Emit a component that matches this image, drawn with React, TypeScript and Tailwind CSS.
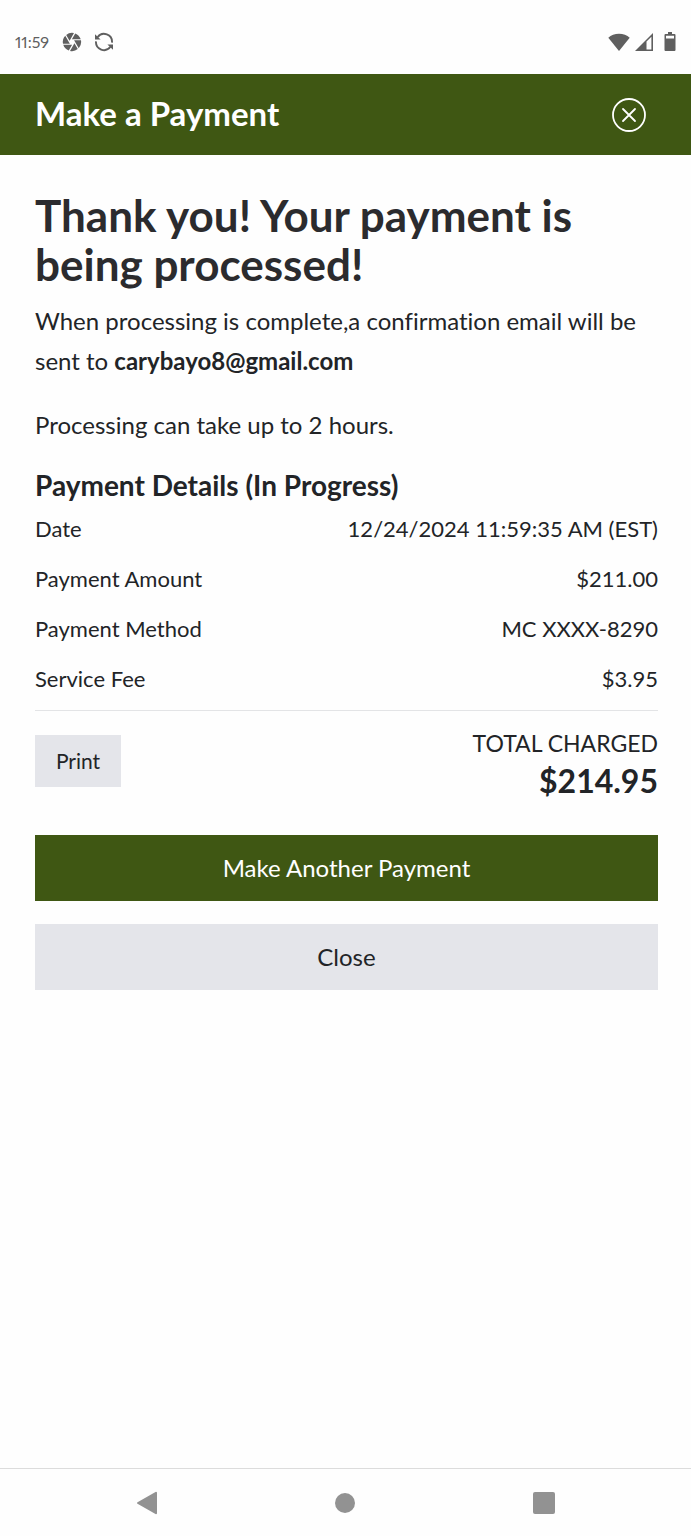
import { MdCamera } from 'react-icons/md';

interface Detail {
  label: string;
  value: string;
}

const details: Detail[] = [
  { label: 'Date', value: '12/24/2024 11:59:35 AM (EST)' },
  { label: 'Payment Amount', value: '$211.00' },
  { label: 'Payment Method', value: 'MC XXXX-8290' },
  { label: 'Service Fee', value: '$3.95' },
];

function StatusBar() {
  return (
    <div className="flex h-[74px] items-center justify-between px-[15px] pt-[9px] text-[#5f5f5f]">
      <div className="flex items-center">
        <span className="w-[46px] text-[16px] leading-6 proportional-nums">11:59</span>
        <MdCamera className="size-[22px]" />
        <svg viewBox="0 0 20 20" className="ml-[11px] size-5" fill="none" stroke="currentColor" strokeWidth="1.9">
          <path d="M3.6 5.2A8 8 0 0 1 18 10.6M16.4 14.8A8 8 0 0 1 2 9.4" />
          <path d="M1 2.2V7.6H6.6ZM19 17.8V12.4H13.4Z" fill="currentColor" stroke="none" />
        </svg>
      </div>
      <div className="flex items-center">
        <svg viewBox="0 0 22 18" className="h-[18px] w-[22px]" fill="currentColor">
          <path d="M11 18 0.3 4.8C3 2.2 6.8 0.7 11 0.7S19 2.2 21.7 4.8Z" />
        </svg>
        <svg viewBox="0 0 18 18" className="ml-[5px] size-[18px]" fill="currentColor">
          <path fillRule="evenodd" d="M0 18 18 0V18ZM11.5 8.5V16.4H16.4V3.7Z" />
        </svg>
        <svg viewBox="0 0 12 19" className="ml-[11px] h-[19px] w-3" fill="currentColor">
          <path fillRule="evenodd" d="M4 0H8V2H10.5Q11.5 2 11.5 3V18Q11.5 19 10.5 19H1.5Q0.5 19 0.5 18V3Q0.5 2 1.5 2H4ZM2 3.8V6.5H10V3.8Z" />
        </svg>
      </div>
    </div>
  );
}

function NavBar() {
  return (
    <nav className="flex h-[68px] items-center justify-around border-t border-[#dcdcdc] px-[47px] text-[#929292]">
      <button type="button" aria-label="Back">
        <svg viewBox="0 0 22 24" className="h-6 w-[22px]" fill="currentColor" stroke="currentColor" strokeWidth="2" strokeLinejoin="round">
          <path d="M2 12 20 1.8V22.2Z" />
        </svg>
      </button>
      <button type="button" aria-label="Home">
        <svg viewBox="0 0 20 20" className="size-5" fill="currentColor">
          <circle cx="10" cy="10" r="10" />
        </svg>
      </button>
      <button type="button" aria-label="Recent apps">
        <svg viewBox="0 0 22 22" className="size-[22px]" fill="currentColor">
          <rect width="22" height="22" rx="2" />
        </svg>
      </button>
    </nav>
  );
}

export default function App() {
  return (
    <div className="flex min-h-screen flex-col bg-[#fefefe] font-[Lato,sans-serif] text-[#222427] [font-variant-ligatures:none]">
      <StatusBar />

      <header className="flex h-[81px] items-center justify-between bg-[#3f5713] pl-[35px] pr-[45px] text-white">
        <span className="pb-1 text-[33px] font-bold leading-10">Make a Payment</span>
        <button type="button" aria-label="Dismiss">
          <svg viewBox="0 0 34 34" className="size-[34px]" fill="none" stroke="currentColor" strokeWidth="1.8" strokeLinecap="round">
            <circle cx="17" cy="17" r="16" />
            <path d="M11 11 23 23M23 11 11 23" />
          </svg>
        </button>
      </header>

      <main className="flex-1 pl-[35px] pr-[33px] pt-9">
        <h1 className="text-[44px] font-bold leading-[49px] text-[#2b2b2e]">
          Thank you! Your payment is being processed!
        </h1>
        <p className="mt-3 text-[24px] leading-10">
          When processing is complete,a confirmation email will be sent to{' '}
          <strong className="font-bold">carybayo8@gmail.com</strong>
        </p>
        <p className="mt-6 text-[24px] leading-10">Processing can take up to 2 hours.</p>

        <h2 className="mt-6 text-[28px] font-bold leading-8">Payment Details (In Progress)</h2>
        <table className="mt-[3px] w-full text-[22px] leading-[30px]">
          <tbody>
            {details.map((detail) => (
              <tr key={detail.label} className="h-[50px]">
                <th scope="row" className="text-left font-normal">
                  {detail.label}
                </th>
                <td className="text-right">{detail.value}</td>
              </tr>
            ))}
          </tbody>
        </table>

        <div className="mt-[6px] flex items-start justify-between border-t border-[#e3e4e6] pt-4">
          <button type="button" className="mt-2 h-[52px] w-[86px] bg-[#e4e5ea] text-[21px]">
            Print
          </button>
          <div className="text-right">
            <div className="text-[23px] leading-8">TOTAL CHARGED</div>
            <div className="text-[32px] font-bold leading-[44px]">$214.95</div>
          </div>
        </div>

        <div className="mt-8 flex flex-col gap-[23px] text-[24px]">
          <button type="button" className="h-[66px] w-full bg-[#3f5713] text-white">
            Make Another Payment
          </button>
          <button type="button" className="h-[66px] w-full bg-[#e4e5ea]">
            Close
          </button>
        </div>
      </main>

      <NavBar />
    </div>
  );
}
